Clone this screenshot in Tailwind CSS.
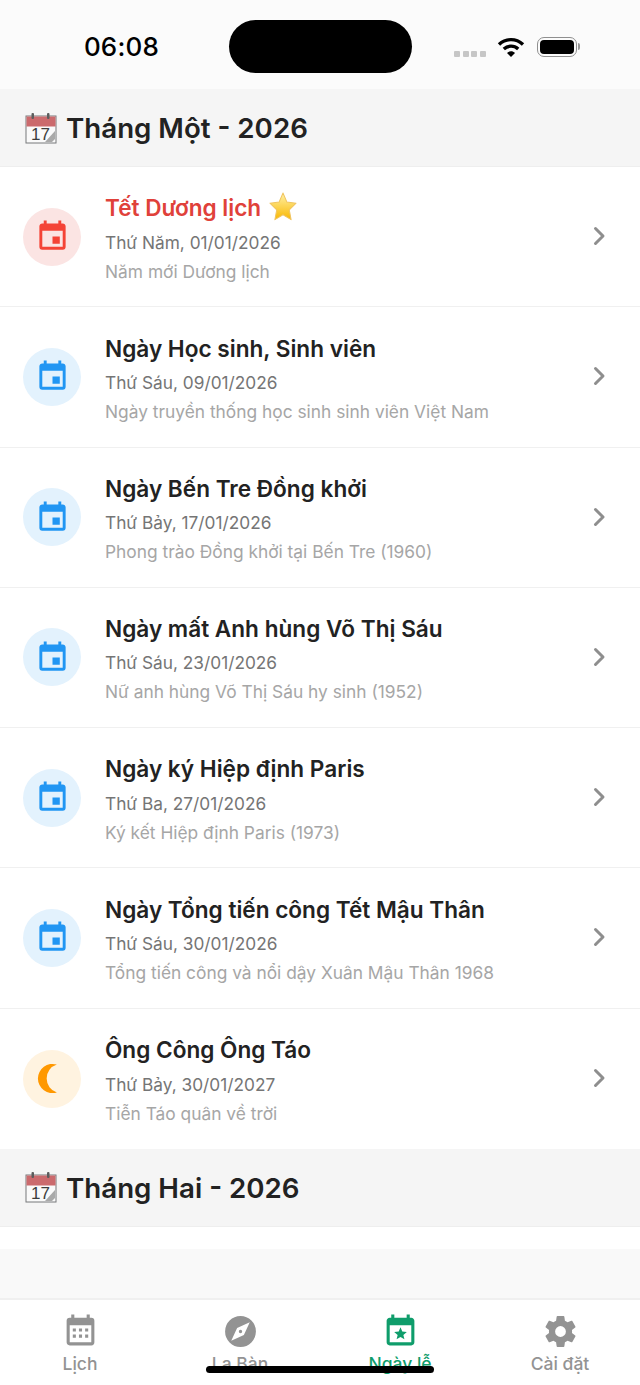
<!DOCTYPE html>
<html><head><meta charset="utf-8"><script src="https://cdn.jsdelivr.net/npm/@tailwindcss/browser@4"></script></head>
<body class="m-0">
<div class="relative w-[640px] h-[1385px] overflow-hidden bg-[#f9f9f9] flex flex-col font-['Inter','Noto_Sans',sans-serif] antialiased">

<!-- status bar -->
<div class="h-[89px] shrink-0 bg-[#fbfbfb] flex items-center">
  <div class="w-[243px] text-center text-[26px] font-medium text-black leading-none tracking-[0.2px] mt-[5px]">06:08</div>
  <div class="w-[183px] h-[53px] rounded-[27px] bg-black mt-[4px] ml-[-14px]"></div>
  <div class="flex items-center ml-[42px] gap-[2.5px] mt-[18px]">
    <span class="w-[6px] h-[6px] rounded-[1px] bg-[#c6c6c6]"></span><span class="w-[6px] h-[6px] rounded-[1px] bg-[#c6c6c6]"></span><span class="w-[6px] h-[6px] rounded-[1px] bg-[#c6c6c6]"></span><span class="w-[6px] h-[6px] rounded-[1px] bg-[#c6c6c6]"></span>
  </div>
  <svg class="ml-[11px] mt-[4px]" width="28" height="20" viewBox="0 0 28 20"><path d="M2 7.500C9 1 19 1 26 7.500" fill="none" stroke="#000" stroke-width="3.400"/><path d="M6.800 12C11 8.200 17 8.200 21.200 12" fill="none" stroke="#000" stroke-width="3.400"/><path d="M10 16L14 20l4-4c-2.200-2.200-5.800-2.200-8 0z" fill="#000"/></svg>
  <div class="ml-[12px] mt-[4px] flex items-center">
    <div class="w-[40px] h-[20px] rounded-[7px] border-[1.5px] border-[#8f8f8f] p-[2px]"><div class="w-full h-full rounded-[4px] bg-black"></div></div>
    <div class="w-[2px] h-[7px] ml-[1px] rounded-r-[2px] bg-[#9a9a9a]"></div>
  </div>
</div>

<!-- month header -->
<div class="h-[78px] shrink-0 bg-[#f5f5f5] border-b border-[#eeeeee] flex items-center pl-[25px] gap-[9px]">
  <svg width="32" height="32" viewBox="0 0 32 32" class="shrink-0"><rect x="1" y="4" width="30" height="27" fill="#fafafa" stroke="#77797b"/><rect x="1.500" y="4.500" width="29" height="10" fill="#cb6a6d"/><rect x="6.500" y="1" width="2.500" height="6" rx="1" fill="#5c5c5c"/><rect x="22" y="1" width="2.500" height="6" rx="1" fill="#5c5c5c"/><text x="6" y="28" font-size="17" font-family="Liberation Sans" fill="#3d3d3d">17</text><path d="M20 30L30 19v8l-3 3z" fill="#a9a9a9"/></svg>
  <div class="text-[27.7px] font-semibold text-[#222222] leading-none mt-[2px]">Tháng Một - 2026</div>
</div>

<!-- rows -->
<div class="bg-white h-[140.25px] shrink-0 border-b border-[#f0f0f0] flex items-center pl-[23px] pr-[34px]">
  <div class="w-[58px] h-[58px] rounded-full bg-[#fbe4e3] flex items-center justify-center shrink-0"><svg width="35" height="35" viewBox="0 0 24 24" fill="#f44336"><path d="M19,19H5V8H19M16,1V3H8V1H6V3H5C3.89,3 3,3.89 3,5V19A2,2 0 0,0 5,21H19A2,2 0 0,0 21,19V5C21,3.89 20.1,3 19,3H18V1M17,12H12V17H17V12Z"/></svg></div>
  <div class="ml-[24px] flex-1 flex flex-col mt-[3px]">
    <div class="flex items-center h-[30px] text-[22.6px] font-semibold leading-none text-[#e0413a]">Tết Dương lịch<svg class="ml-[7px] -mt-[5px]" width="30" height="30" viewBox="0 0 31 29" preserveAspectRatio="none"><defs><linearGradient id="s" x1="0" y1="0" x2="0" y2="1"><stop offset="0" stop-color="#fff1a8"/><stop offset="1" stop-color="#f9b800"/></linearGradient></defs><path d="M15.500 2l4 8.600 9.500 1.200-7 6.500 1.900 9.400-8.400-4.700-8.400 4.700 1.900-9.400-7-6.500 9.500-1.200z" fill="url(#s)" stroke="#f0c460" stroke-width="1" stroke-linejoin="round"/></svg></div>
    <div class="mt-[7px] text-[17.3px] leading-[24px] text-[#757575]">Thứ Năm, 01/01/2026</div>
    <div class="mt-[6px] text-[17.35px] leading-[22px] text-[#a6a6a6]">Năm mới Dương lịch</div>
  </div>
  <svg width="14" height="20" viewBox="0 0 14 20" class="shrink-0 mb-[1px]"><path d="M3.500 2.500l7.500 7.500-7.500 7.500" fill="none" stroke="#8e8e8e" stroke-width="3" stroke-linecap="round" stroke-linejoin="round"/></svg>
</div>

<div class="bg-white h-[140.25px] shrink-0 border-b border-[#f0f0f0] flex items-center pl-[23px] pr-[34px]">
  <div class="w-[58px] h-[58px] rounded-full bg-[#e3f2fd] flex items-center justify-center shrink-0"><svg width="35" height="35" viewBox="0 0 24 24" fill="#2196f3"><path d="M19,19H5V8H19M16,1V3H8V1H6V3H5C3.89,3 3,3.89 3,5V19A2,2 0 0,0 5,21H19A2,2 0 0,0 21,19V5C21,3.89 20.1,3 19,3H18V1M17,12H12V17H17V12Z"/></svg></div>
  <div class="ml-[24px] flex-1 flex flex-col mt-[3px]">
    <div class="flex items-center h-[30px] text-[22.6px] font-semibold leading-none text-[#222222]">Ngày Học sinh, Sinh viên</div>
    <div class="mt-[7px] text-[17.3px] leading-[24px] text-[#757575]">Thứ Sáu, 09/01/2026</div>
    <div class="mt-[6px] text-[17.35px] leading-[22px] text-[#a6a6a6]">Ngày truyền thống học sinh sinh viên Việt Nam</div>
  </div>
  <svg width="14" height="20" viewBox="0 0 14 20" class="shrink-0 mb-[1px]"><path d="M3.500 2.500l7.500 7.500-7.500 7.500" fill="none" stroke="#8e8e8e" stroke-width="3" stroke-linecap="round" stroke-linejoin="round"/></svg>
</div>

<div class="bg-white h-[140.25px] shrink-0 border-b border-[#f0f0f0] flex items-center pl-[23px] pr-[34px]">
  <div class="w-[58px] h-[58px] rounded-full bg-[#e3f2fd] flex items-center justify-center shrink-0"><svg width="35" height="35" viewBox="0 0 24 24" fill="#2196f3"><path d="M19,19H5V8H19M16,1V3H8V1H6V3H5C3.89,3 3,3.89 3,5V19A2,2 0 0,0 5,21H19A2,2 0 0,0 21,19V5C21,3.89 20.1,3 19,3H18V1M17,12H12V17H17V12Z"/></svg></div>
  <div class="ml-[24px] flex-1 flex flex-col mt-[3px]">
    <div class="flex items-center h-[30px] text-[22.6px] font-semibold leading-none text-[#222222]">Ngày Bến Tre Đồng khởi</div>
    <div class="mt-[7px] text-[17.3px] leading-[24px] text-[#757575]">Thứ Bảy, 17/01/2026</div>
    <div class="mt-[6px] text-[17.35px] leading-[22px] text-[#a6a6a6]">Phong trào Đồng khởi tại Bến Tre (1960)</div>
  </div>
  <svg width="14" height="20" viewBox="0 0 14 20" class="shrink-0 mb-[1px]"><path d="M3.500 2.500l7.500 7.500-7.500 7.500" fill="none" stroke="#8e8e8e" stroke-width="3" stroke-linecap="round" stroke-linejoin="round"/></svg>
</div>

<div class="bg-white h-[140.25px] shrink-0 border-b border-[#f0f0f0] flex items-center pl-[23px] pr-[34px]">
  <div class="w-[58px] h-[58px] rounded-full bg-[#e3f2fd] flex items-center justify-center shrink-0"><svg width="35" height="35" viewBox="0 0 24 24" fill="#2196f3"><path d="M19,19H5V8H19M16,1V3H8V1H6V3H5C3.89,3 3,3.89 3,5V19A2,2 0 0,0 5,21H19A2,2 0 0,0 21,19V5C21,3.89 20.1,3 19,3H18V1M17,12H12V17H17V12Z"/></svg></div>
  <div class="ml-[24px] flex-1 flex flex-col mt-[3px]">
    <div class="flex items-center h-[30px] text-[22.6px] font-semibold leading-none text-[#222222]">Ngày mất Anh hùng Võ Thị Sáu</div>
    <div class="mt-[7px] text-[17.3px] leading-[24px] text-[#757575]">Thứ Sáu, 23/01/2026</div>
    <div class="mt-[6px] text-[17.35px] leading-[22px] text-[#a6a6a6]">Nữ anh hùng Võ Thị Sáu hy sinh (1952)</div>
  </div>
  <svg width="14" height="20" viewBox="0 0 14 20" class="shrink-0 mb-[1px]"><path d="M3.500 2.500l7.500 7.500-7.500 7.500" fill="none" stroke="#8e8e8e" stroke-width="3" stroke-linecap="round" stroke-linejoin="round"/></svg>
</div>

<div class="bg-white h-[140.25px] shrink-0 border-b border-[#f0f0f0] flex items-center pl-[23px] pr-[34px]">
  <div class="w-[58px] h-[58px] rounded-full bg-[#e3f2fd] flex items-center justify-center shrink-0"><svg width="35" height="35" viewBox="0 0 24 24" fill="#2196f3"><path d="M19,19H5V8H19M16,1V3H8V1H6V3H5C3.89,3 3,3.89 3,5V19A2,2 0 0,0 5,21H19A2,2 0 0,0 21,19V5C21,3.89 20.1,3 19,3H18V1M17,12H12V17H17V12Z"/></svg></div>
  <div class="ml-[24px] flex-1 flex flex-col mt-[3px]">
    <div class="flex items-center h-[30px] text-[22.6px] font-semibold leading-none text-[#222222]">Ngày ký Hiệp định Paris</div>
    <div class="mt-[7px] text-[17.3px] leading-[24px] text-[#757575]">Thứ Ba, 27/01/2026</div>
    <div class="mt-[6px] text-[17.35px] leading-[22px] text-[#a6a6a6]">Ký kết Hiệp định Paris (1973)</div>
  </div>
  <svg width="14" height="20" viewBox="0 0 14 20" class="shrink-0 mb-[1px]"><path d="M3.500 2.500l7.500 7.500-7.500 7.500" fill="none" stroke="#8e8e8e" stroke-width="3" stroke-linecap="round" stroke-linejoin="round"/></svg>
</div>

<div class="bg-white h-[140.25px] shrink-0 border-b border-[#f0f0f0] flex items-center pl-[23px] pr-[34px]">
  <div class="w-[58px] h-[58px] rounded-full bg-[#e3f2fd] flex items-center justify-center shrink-0"><svg width="35" height="35" viewBox="0 0 24 24" fill="#2196f3"><path d="M19,19H5V8H19M16,1V3H8V1H6V3H5C3.89,3 3,3.89 3,5V19A2,2 0 0,0 5,21H19A2,2 0 0,0 21,19V5C21,3.89 20.1,3 19,3H18V1M17,12H12V17H17V12Z"/></svg></div>
  <div class="ml-[24px] flex-1 flex flex-col mt-[3px]">
    <div class="flex items-center h-[30px] text-[22.6px] font-semibold leading-none text-[#222222]">Ngày Tổng tiến công Tết Mậu Thân</div>
    <div class="mt-[7px] text-[17.3px] leading-[24px] text-[#757575]">Thứ Sáu, 30/01/2026</div>
    <div class="mt-[6px] text-[17.35px] leading-[22px] text-[#a6a6a6]">Tổng tiến công và nổi dậy Xuân Mậu Thân 1968</div>
  </div>
  <svg width="14" height="20" viewBox="0 0 14 20" class="shrink-0 mb-[1px]"><path d="M3.500 2.500l7.500 7.500-7.500 7.500" fill="none" stroke="#8e8e8e" stroke-width="3" stroke-linecap="round" stroke-linejoin="round"/></svg>
</div>

<div class="bg-white h-[140.25px] shrink-0 flex items-center pl-[23px] pr-[34px]">
  <div class="w-[58px] h-[58px] rounded-full bg-[#fff3e0] flex items-center justify-center shrink-0"><svg width="35" height="35" viewBox="0 0 24 24" fill="#ff9800"><path d="M2 12A10 10 0 0 0 15 21.540A10 10 0 0 1 15 2.460A10 10 0 0 0 2 12Z"/></svg></div>
  <div class="ml-[24px] flex-1 flex flex-col mt-[3px]">
    <div class="flex items-center h-[30px] text-[22.6px] font-semibold leading-none text-[#222222]">Ông Công Ông Táo</div>
    <div class="mt-[7px] text-[17.3px] leading-[24px] text-[#757575]">Thứ Bảy, 30/01/2027</div>
    <div class="mt-[6px] text-[17.35px] leading-[22px] text-[#a6a6a6]">Tiễn Táo quân về trời</div>
  </div>
  <svg width="14" height="20" viewBox="0 0 14 20" class="shrink-0 mb-[1px]"><path d="M3.500 2.500l7.500 7.500-7.500 7.500" fill="none" stroke="#8e8e8e" stroke-width="3" stroke-linecap="round" stroke-linejoin="round"/></svg>
</div>

<!-- month header 2 -->
<div class="h-[78px] shrink-0 bg-[#f5f5f5] border-b border-[#eeeeee] flex items-center pl-[25px] gap-[9px]">
  <svg width="32" height="32" viewBox="0 0 32 32" class="shrink-0"><rect x="1" y="4" width="30" height="27" fill="#fafafa" stroke="#77797b"/><rect x="1.500" y="4.500" width="29" height="10" fill="#cb6a6d"/><rect x="6.500" y="1" width="2.500" height="6" rx="1" fill="#5c5c5c"/><rect x="22" y="1" width="2.500" height="6" rx="1" fill="#5c5c5c"/><text x="6" y="28" font-size="17" font-family="Liberation Sans" fill="#3d3d3d">17</text><path d="M20 30L30 19v8l-3 3z" fill="#a9a9a9"/></svg>
  <div class="text-[27.7px] font-semibold text-[#222222] leading-none mt-[4px]">Tháng Hai - 2026</div>
</div>

<div class="h-[22px] shrink-0 bg-white"></div>
<div class="flex-1 bg-[#f9f9f9]"></div>

<!-- tab bar -->
<div class="h-[87px] shrink-0 bg-white border-t-2 border-[#f0f0f0] flex">
  <div class="flex-1 flex flex-col items-center pt-[13px]">
    <svg width="37" height="37" viewBox="0 0 24 24" fill="#939393"><path d="M9,10V12H7V10H9M13,10V12H11V10H13M17,10V12H15V10H17M19,3A2,2 0 0,1 21,5V19A2,2 0 0,1 19,21H5C3.890,21 3,20.100 3,19V5A2,2 0 0,1 5,3H6V1H8V3H16V1H18V3H19M19,19V8H5V19H19M9,14V16H7V14H9M13,14V16H11V14H13M17,14V16H15V14H17Z"/></svg>
    <div class="text-[17.5px] leading-[22px] font-medium text-[#939393] mt-[3px]">Lịch</div>
  </div>
  <div class="flex-1 flex flex-col items-center pt-[13px]">
    <svg width="37" height="37" viewBox="0 0 24 24" fill="#939393"><path d="M14.190,14.190L6,18L9.810,9.810L18,6M12,2A10,10 0 0,0 2,12A10,10 0 0,0 12,22A10,10 0 0,0 22,12A10,10 0 0,0 12,2M12,10.900A1.100,1.100 0 0,0 10.900,12A1.100,1.100 0 0,0 12,13.100A1.100,1.100 0 0,0 13.100,12A1.100,1.100 0 0,0 12,10.900Z"/></svg>
    <div class="text-[17.5px] leading-[22px] font-medium text-[#939393] mt-[3px]">La Bàn</div>
  </div>
  <div class="flex-1 flex flex-col items-center pt-[13px]">
    <svg width="37" height="37" viewBox="0 0 24 24" fill="#0f9d6b"><path d="M19 3H18V1H16V3H8V1H6V3H5C3.890 3 3 3.900 3 5V19C3 20.100 3.900 21 5 21H19C20.100 21 21 20.100 21 19V5C21 3.900 20.100 3 19 3M19 19H5V8H19V19Z"/><path d="M12 9.300l1.150 2.750 2.950.22-2.250 1.930.7 2.900L12 15.550 9.450 17.100l.7-2.900-2.250-1.930 2.950-.22z"/></svg>
    <div class="text-[17.5px] leading-[22px] font-medium text-[#0f9d6b] mt-[3px]">Ngày lễ</div>
  </div>
  <div class="flex-1 flex flex-col items-center pt-[13px]">
    <svg width="37" height="37" viewBox="0 0 24 24" fill="#939393"><path d="M12,15.500A3.500,3.500 0 0,1 8.500,12A3.500,3.500 0 0,1 12,8.500A3.500,3.500 0 0,1 15.500,12A3.500,3.500 0 0,1 12,15.500M19.430,12.970C19.470,12.650 19.500,12.330 19.500,12C19.500,11.670 19.470,11.340 19.430,11L21.540,9.370C21.730,9.220 21.780,8.950 21.660,8.730L19.660,5.270C19.540,5.050 19.270,4.960 19.050,5.050L16.560,6.050C16.040,5.660 15.500,5.320 14.870,5.070L14.500,2.420C14.460,2.180 14.250,2 14,2H10C9.750,2 9.540,2.180 9.500,2.420L9.130,5.070C8.500,5.320 7.960,5.660 7.440,6.050L4.950,5.050C4.730,4.960 4.460,5.050 4.340,5.270L2.340,8.730C2.210,8.950 2.270,9.220 2.460,9.370L4.570,11C4.530,11.340 4.500,11.670 4.500,12C4.500,12.330 4.530,12.650 4.570,12.970L2.460,14.630C2.270,14.780 2.210,15.050 2.340,15.270L4.340,18.730C4.460,18.950 4.730,19.030 4.950,18.950L7.440,17.940C7.960,18.340 8.500,18.680 9.130,18.930L9.500,21.580C9.540,21.820 9.750,22 10,22H14C14.250,22 14.460,21.820 14.500,21.580L14.870,18.930C15.500,18.670 16.040,18.340 16.560,17.940L19.050,18.950C19.270,19.030 19.540,18.950 19.660,18.730L21.660,15.270C21.780,15.050 21.730,14.780 21.540,14.630L19.430,12.970Z"/></svg>
    <div class="text-[17.5px] leading-[22px] font-medium text-[#939393] mt-[3px]">Cài đặt</div>
  </div>
</div>

<!-- home indicator overlay -->
<div class="absolute left-[206px] top-[1366px] w-[228px] h-[7px] rounded-full bg-black"></div>
</div>
</body></html>
